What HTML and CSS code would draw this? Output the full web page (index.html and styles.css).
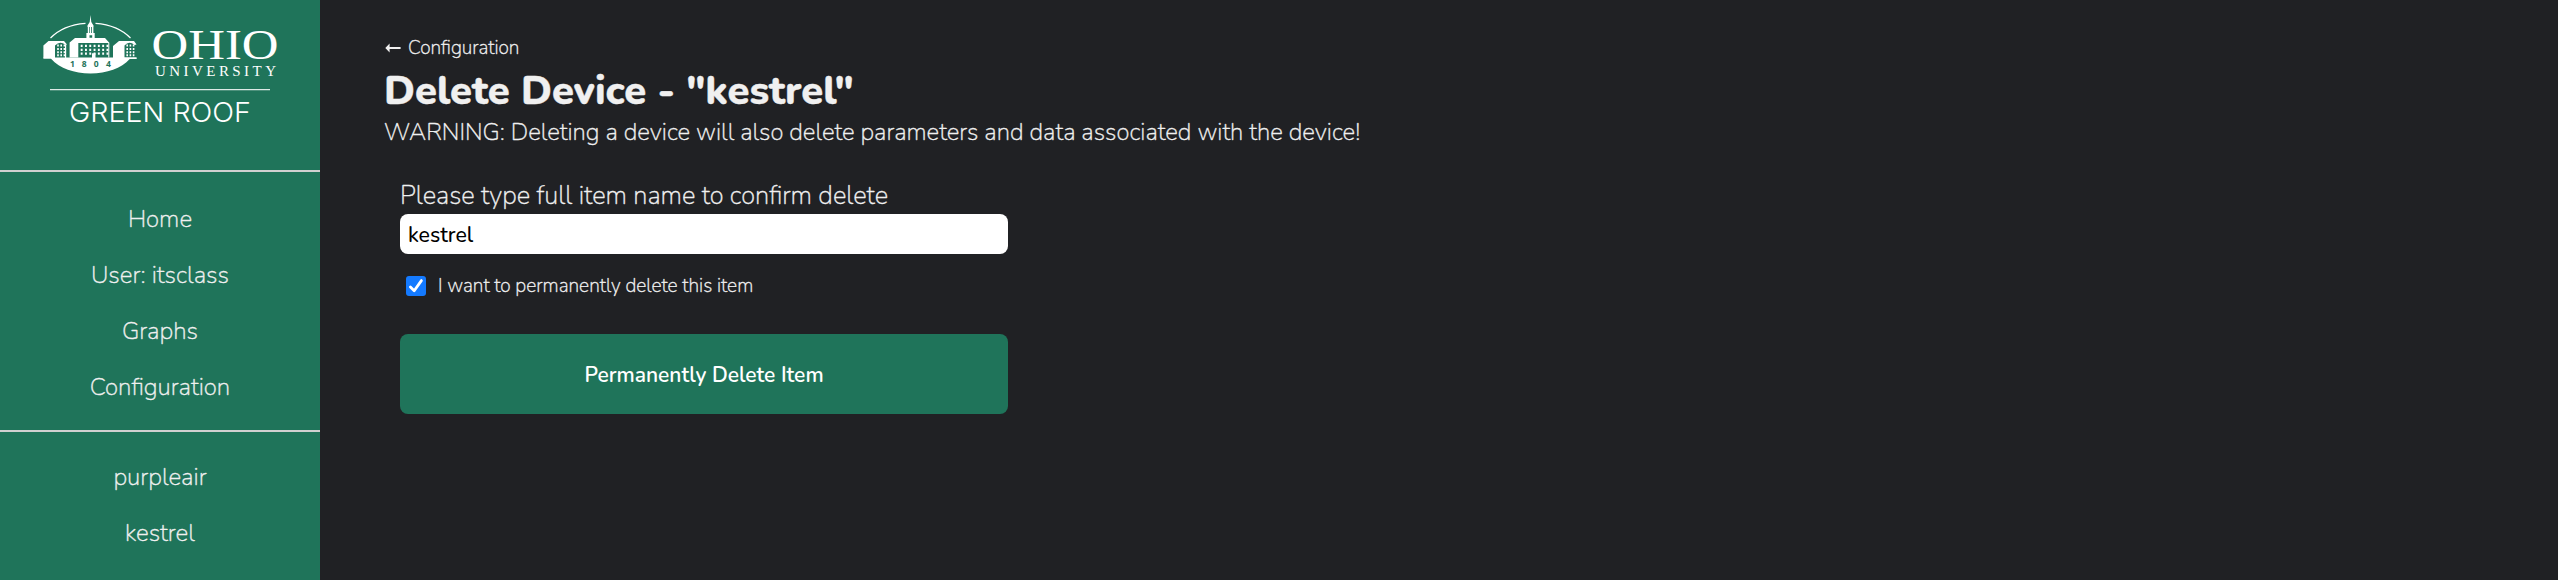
FILE: index.html
```html
<!DOCTYPE html>
<html lang="en">
<head>
<meta charset="utf-8">
<title>Delete Device</title>
<link rel="stylesheet" href="styles.css">
</head>
<body>
<aside class="sidebar">
  <div class="brand">
    <svg class="logo" width="320" height="140" viewBox="0 0 320 140" role="img" aria-label="Ohio University Green Roof">
      <g fill="none" stroke="#fff" stroke-width="1.2">
        <path d="M50.5 38Q63 25 85.5 23.3"/>
        <path d="M95.5 23.3Q118 25 130.5 38"/>
      </g>
      <g fill="#fff">
        <path d="M90.5 15L91.3 22L93.5 25.5V27H87.5V25.5L89.7 22Z"/>
        <path d="M87.8 27H89.3V33H87.8ZM90 27H91.2V33H90ZM92 27H93.4V33H92Z"/>
        <path fill-rule="evenodd" d="M86.4 33H94.7V38H105L109.5 43H78.3V57.5H69.6V42.5L75 38H86.4ZM89.5 35.2V37.7H92.2V35.2Z"/>
        <path d="M43.4 45.5L48.5 41H64L67 44.5L65.5 45Q60 40.5 55 45.5V58H43.4Z"/>
        <path d="M113 46L119 41H134L136.5 44.5L134.5 45Q129 40.5 124.5 45.5V57.5H136.5V59H113Z"/>
        <path d="M43.4 57.5H136.5V58.8H130C121 68.5 107 73.5 90.5 73.5S60 68.5 51 58.8H43.4Z"/>
        <path d="M65 45H66.2V58H65ZM108.3 43H109.3V57.5H108.3ZM92 53.3H95.5V58H92Z"/>
      </g>
      <g fill="none" stroke="#fff" stroke-width="2.2">
        <path stroke-dasharray="1.9 2.4" d="M80.7 45.8H109M80.7 49.8H109M80.7 53.7H109"/>
        <path stroke-dasharray="1.6 1.6" stroke-width="1.9" d="M57.2 45.5H65M57.2 49H65M57.2 52.2H65M57.2 55.3H65"/>
        <path stroke-dasharray="1.6 1.6" stroke-width="1.9" d="M126.4 45.5H134.5M126.4 49H134.5M126.4 52.2H134.5M126.4 55.3H134.5"/>
      </g>
      <text class="logo-year" x="70 81.8 93.8 106" y="67.2">1804</text>
      <text class="logo-ohio" x="151.5" y="59" textLength="127" lengthAdjust="spacingAndGlyphs">OHIO</text>
      <text class="logo-univ" x="155" y="76" textLength="121">UNIVERSITY</text>
      <path stroke="#fff" stroke-opacity=".85" stroke-width="1.3" d="M50 89.6H270"/>
      <text class="logo-roof" x="69" y="122" textLength="182" lengthAdjust="spacingAndGlyphs">GREEN ROOF</text>
    </svg>
  </div>
  <nav class="nav">
    <a class="nav-link">Home</a>
    <a class="nav-link">User: itsclass</a>
    <a class="nav-link">Graphs</a>
    <a class="nav-link">Configuration</a>
  </nav>
  <nav class="nav devices">
    <a class="nav-link">purpleair</a>
    <a class="nav-link">kestrel</a>
  </nav>
</aside>
<main class="main">
  <a class="back">
    <svg width="16" height="12" viewBox="0 0 16 12" aria-hidden="true"><path fill="#f0f0f0" d="M.3 6L4.6 1.6V5H15.6V7H4.6V10.4Z"/></svg>
    <span>Configuration</span>
  </a>
  <h1 class="title">Delete Device - "kestrel"</h1>
  <p class="warning">WARNING: Deleting a device will also delete parameters and data associated with the device!</p>
  <form class="form">
    <label class="label" for="item">Please type full item name to confirm delete</label>
    <input class="field" id="item" type="text" value="kestrel">
    <label class="confirm">
      <input class="check-input" type="checkbox" checked>
      <svg class="check" width="20" height="20" viewBox="0 0 20 20" aria-hidden="true"><rect width="20" height="20" rx="3" fill="#147aff"/><path d="M4.4 11L8.2 14.8L15.4 4.6" fill="none" stroke="#fff" stroke-width="2.8" stroke-linecap="round" stroke-linejoin="round"/></svg>
      <span>I want to permanently delete this item</span>
    </label>
    <button class="submit" type="button">Permanently Delete Item</button>
  </form>
</main>
</body>
</html>
```
FILE: styles.css
```css
* { box-sizing: border-box; }

body {
  display: flex;
  height: 580px;
  margin: 0;
  overflow: hidden;
  background: #202124;
  color: #f0f0f0;
  font-family: Nunito, Lato, sans-serif;
  font-weight: 200;
  -webkit-text-stroke: .35px #f0f0f0;
}

.sidebar {
  width: 320px;
  background: #1f745a;
}

.brand {
  height: 172px;
  border-bottom: 2px solid #d0d0d0;
  -webkit-text-stroke: 0;
}

.logo { display: block; }
.logo text { fill: #fff; }
.logo .logo-year { fill: #1f745a; font: 700 8.5px "Open Sans", sans-serif; }
.logo-ohio { font: 42px "Liberation Serif", serif; }
.logo-univ { font: 15px "Liberation Serif", serif; }
.logo-roof { font: 300 27px Inter, sans-serif; }

.nav {
  display: flex;
  flex-direction: column;
  gap: 24px;
  height: 260px;
  padding-top: 32px;
  border-bottom: 2px solid #d0d0d0;
}

.devices {
  border: 0;
  height: 148px;
  padding-top: 30px;
}

.nav-link {
  font-size: 24.2px;
  line-height: 32px;
  text-align: center;
}

.main {
  flex: 1;
  padding: 36px 64px 0;
}

.back {
  display: flex;
  align-items: center;
  gap: 7px;
  height: 24px;
  padding-left: 1px;
  font-size: 19.2px;
  line-height: 24px;
}

.title {
  margin: 5px 0 0;
  font-size: 40px;
  font-weight: 800;
  line-height: 52px;
}

.warning {
  margin: -1px 0 0;
  font-size: 24px;
  line-height: 32px;
}

.form {
  width: 608px;
  margin: 32px 0 0 16px;
}

.label {
  display: block;
  height: 34px;
  font-size: 25.6px;
  line-height: 32px;
}

.field {
  display: block;
  width: 100%;
  height: 40px;
  padding: 2px 8px 0;
  border: 0;
  border-radius: 8px;
  background: #fff;
  color: #000;
  font: 500 21.33px Nunito, Lato, sans-serif;
  -webkit-text-stroke: 0;
}

.confirm {
  display: flex;
  align-items: center;
  gap: 12px;
  height: 24px;
  margin: 20px 0 0 6px;
  font-size: 19.2px;
}

.check-input { display: none; }

.submit {
  display: block;
  width: 100%;
  height: 80px;
  margin-top: 36px;
  padding: 2px 0 0;
  border: 0;
  border-radius: 8px;
  background: #1f745a;
  color: #fff;
  font: 600 21px Nunito, Lato, sans-serif;
  -webkit-text-stroke: 0;
}
```
